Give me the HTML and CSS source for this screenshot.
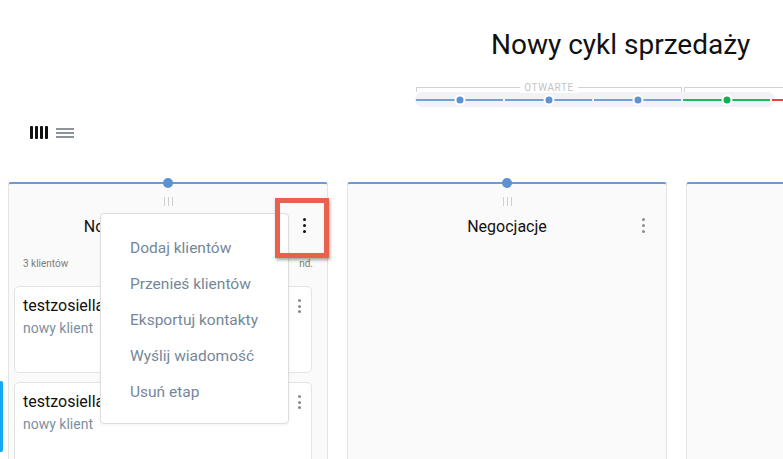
FILE: index.html
```html
<!DOCTYPE html>
<html lang="pl">
<head>
<meta charset="utf-8">
<title>Nowy cykl sprzedaży</title>
<link rel="stylesheet" href="styles.css">
</head>
<body>
<div class="page">
  <h1 class="title">Nowy cykl sprzedaży</h1>

  <div class="progress">
    <div class="brackets">
      <div class="bracket bracket-open"><span class="bracket-label">OTWARTE</span></div>
      <div class="bracket bracket-closed"></div>
    </div>
    <div class="track">
      <div class="seg seg-blue"><span class="dot"></span></div>
      <div class="seg seg-blue"><span class="dot"></span></div>
      <div class="seg seg-blue"><span class="dot"></span></div>
      <div class="seg seg-green"><span class="dot"></span></div>
      <div class="seg seg-red"></div>
    </div>
  </div>

  <div class="view-toggle">
    <span class="icon-columns"><i></i><i></i><i></i><i></i></span>
    <span class="icon-list"><i></i><i></i><i></i></span>
  </div>

  <div class="board">
    <section class="column">
      <span class="col-dot"></span>
      <div class="handle"><i></i><i></i><i></i></div>
      <div class="col-head">
        <h2 class="col-title">Nowy potencjalny klient</h2>
        <span class="kebab kebab-active"><i></i><i></i><i></i></span>
      </div>
      <div class="col-meta">
        <span>3 klientów</span>
        <span>nd.</span>
      </div>
      <div class="cards">
        <article class="card">
          <div class="card-text">
            <div class="card-name">testzosiella@gmail.com</div>
            <div class="card-sub">nowy klient</div>
          </div>
          <span class="kebab kebab-small"><i></i><i></i><i></i></span>
        </article>
        <article class="card">
          <div class="card-text">
            <div class="card-name">testzosiella2@gmail.com</div>
            <div class="card-sub">nowy klient</div>
          </div>
          <span class="kebab kebab-small"><i></i><i></i><i></i></span>
        </article>
      </div>
    </section>

    <section class="column">
      <span class="col-dot"></span>
      <div class="handle"><i></i><i></i><i></i></div>
      <div class="col-head">
        <h2 class="col-title">Negocjacje</h2>
        <span class="kebab"><i></i><i></i><i></i></span>
      </div>
    </section>

    <section class="column"></section>
  </div>

  <ul class="menu">
    <li>Dodaj klientów</li>
    <li>Przenieś klientów</li>
    <li>Eksportuj kontakty</li>
    <li>Wyślij wiadomość</li>
    <li>Usuń etap</li>
  </ul>

  <div class="highlight"></div>
  <div class="side-tab"></div>
</div>
</body>
</html>
```
FILE: styles.css
```css
html, body {
  margin: 0;
  padding: 0;
  background: #ffffff;
  overflow: hidden;
}
body {
  font-family: Roboto, "Liberation Sans", sans-serif;
  color: #1a1a1a;
  width: 783px;
  height: 459px;
}
.page {
  position: relative;
  width: 783px;
  height: 459px;
  overflow: hidden;
}
.title {
  margin: 0;
  padding: 29px 0 0 491px;
  font-size: 28px;
  line-height: 32px;
  font-weight: 400;
  color: #111;
  white-space: nowrap;
}

/* progress */
.progress {
  margin: 22px 0 0 415px;
  width: 420px;
}
.brackets {
  display: flex;
  height: 9px;
  gap: 2px;
  padding-left: 1px;
}
.bracket {
  position: relative;
  height: 5px;
  margin-top: 4px;
  border-top: 1px solid #d2d2d2;
  border-left: 1px solid #d2d2d2;
  box-sizing: border-box;
}
.bracket-open {
  width: 266px;
  border-right: 1px solid #d2d2d2;
}
.bracket-closed {
  flex: 1;
}
.bracket-label {
  position: absolute;
  left: 50%;
  top: -6px;
  transform: translateX(-50%);
  background: #fff;
  padding: 0 4px;
  font-size: 10px;
  line-height: 11px;
  letter-spacing: 0.6px;
  color: #c4c4c4;
}
.track {
  display: flex;
  gap: 2px;
  height: 15px;
  width: 360px;
  padding-left: 1px;
  box-sizing: border-box;
  background: #f1f2f6;
  border-radius: 8px;
  align-items: center;
}
.seg {
  position: relative;
  width: 87px;
  height: 2px;
  flex: none;
}
.seg-blue { background: #74a2d6; }
.seg-green { background: #1dbb60; }
.seg-red { background: #ef4040; width: 20px; }
.dot {
  position: absolute;
  left: 50%;
  top: 50%;
  width: 7px;
  height: 7px;
  border-radius: 50%;
  border: 2px solid #fff;
  transform: translate(-50%, -50%);
}
.seg-blue .dot { background: #5b92cf; }
.seg-green .dot { background: #13b057; }

/* view toggle */
.view-toggle {
  display: flex;
  align-items: center;
  gap: 8px;
  margin: 19px 0 0 30px;
  height: 13px;
}
.icon-columns {
  display: flex;
  gap: 2px;
}
.icon-columns i {
  display: block;
  width: 3px;
  height: 13px;
  background: #111;
  border-radius: 1px;
}
.icon-list {
  display: flex;
  flex-direction: column;
  gap: 2px;
  margin-top: 1px;
}
.icon-list i {
  display: block;
  width: 18px;
  height: 2px;
  background: #8c939b;
}

/* board */
.board {
  display: flex;
  gap: 19px;
  margin: 43px 0 0 8px;
}
.column {
  position: relative;
  flex: none;
  width: 320px;
  height: 300px;
  box-sizing: border-box;
  background: #fafafa;
  border: 1px solid #e4e4e4;
  border-top: 2px solid #6a9bd2;
  border-radius: 3px 3px 0 0;
}
.col-dot {
  position: absolute;
  left: 50%;
  top: -1px;
  width: 10px;
  height: 10px;
  border-radius: 50%;
  background: #5b92cf;
  transform: translate(-50%, -50%);
}
.handle {
  display: flex;
  justify-content: center;
  gap: 3px;
  margin-top: 13px;
  height: 9px;
}
.handle i {
  display: block;
  width: 1px;
  height: 9px;
  background: #cfcfcf;
}
.col-head {
  position: relative;
  display: flex;
  justify-content: center;
  align-items: center;
  margin-top: 6px;
  height: 28px;
}
.col-title {
  margin: 0;
  font-size: 16px;
  font-weight: 400;
  color: #111;
  white-space: nowrap;
}
.kebab {
  position: absolute;
  right: 21px;
  top: 6px;
  display: flex;
  flex-direction: column;
  gap: 3px;
}
.kebab i {
  display: block;
  width: 3px;
  height: 3px;
  border-radius: 50%;
  background: #8d8d8d;
}
.kebab-active i {
  background: #111;
}
.col-meta {
  display: flex;
  justify-content: space-between;
  margin: 18px 14px 0 14px;
  font-size: 10px;
  line-height: 12px;
  color: #7a7a7a;
}
.cards {
  display: flex;
  flex-direction: column;
  gap: 9px;
  padding: 16px 15px 0 5px;
}
.card {
  position: relative;
  height: 87px;
  box-sizing: border-box;
  background: #fff;
  border: 1px solid #e3e3e3;
  border-radius: 5px;
  padding: 8px 30px 0 8px;
  overflow: hidden;
}
.card-name {
  font-size: 16px;
  line-height: 22px;
  color: #111;
  white-space: nowrap;
}
.card-sub {
  margin-top: 1px;
  font-size: 14px;
  line-height: 20px;
  color: #7c8fa2;
}
.kebab-small {
  right: 10px;
  top: 12px;
  gap: 2.5px;
}
.kebab-small i {
  width: 3px;
  height: 3px;
  background: #8a8a8a;
}

/* overlay menu */
.menu {
  position: absolute;
  left: 100px;
  top: 213px;
  width: 189px;
  height: 211px;
  box-sizing: border-box;
  margin: 0;
  padding: 22px 0 0 29px;
  list-style: none;
  background: #fff;
  border: 1px solid #dedede;
  border-radius: 4px;
  box-shadow: 0 1px 3px rgba(0, 0, 0, 0.06);
}
.menu li {
  height: 36px;
  line-height: 24px;
  font-size: 15.5px;
  color: #74879a;
  white-space: nowrap;
}

.highlight {
  position: absolute;
  left: 275px;
  top: 198px;
  width: 54px;
  height: 60px;
  box-sizing: border-box;
  border: 5px solid #e9604d;
  box-shadow: 1px 2px 3px rgba(0, 0, 0, 0.35);
}
.side-tab {
  position: absolute;
  left: 0;
  top: 381px;
  width: 3px;
  height: 71px;
  background: #13a9f4;
  border-radius: 0 2px 2px 0;
}
```
